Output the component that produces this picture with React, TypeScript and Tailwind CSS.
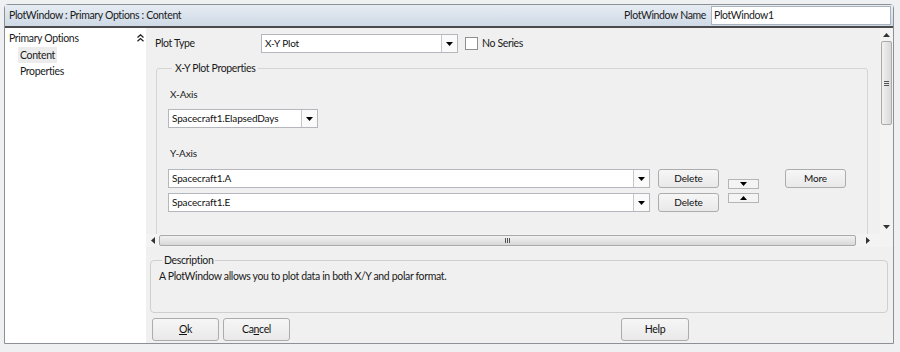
import React from 'react';

const font = "font-['Segoe_UI','Lato',sans-serif]";

const DownTri = ({ color = '#000' }: { color?: string }) => (
  <svg width="7" height="4" viewBox="0 0 7 4">
    <path d="M0 0h7L3.5 4z" fill={color} />
  </svg>
);

const UpTri = ({ color = '#000' }: { color?: string }) => (
  <svg width="7" height="4" viewBox="0 0 7 4">
    <path d="M0 4h7L3.5 0z" fill={color} />
  </svg>
);

const Combo = ({ value, className }: { value: string; className: string }) => (
  <div className={`flex h-[19px] border border-[#b5b7bc] bg-white ${className}`}>
    <div className="flex-1 truncate pl-[3px] text-[10px] leading-[17px] tracking-[-0.15px] text-[#111]">{value}</div>
    <div className="flex w-[16px] items-center justify-center border-l border-[#c5c7cc] bg-[#fafafa]">
      <DownTri />
    </div>
  </div>
);

const Button = ({ children, className }: { children: React.ReactNode; className: string }) => (
  <button className={`flex items-center justify-center rounded-[3px] border border-[#acacac] bg-gradient-to-b from-[#f6f6f6] to-[#e9e9e9] text-[#111] ${className}`}>
    {children}
  </button>
);

export default function App() {
  return (
    <div className={`${font} h-[352px] w-[900px] overflow-hidden bg-[#eef0f2] p-[4px] pb-[6px] pr-[6px] text-[10.5px] tracking-[-0.35px] text-[#1a1a1a]`}>
      <div className="flex h-[340px] flex-col rounded-t-[4px] border border-[#8d9196] bg-[#f0f0f0]">
        {/* header */}
        <div className="flex h-[23px] items-center border-b-2 border-[#4a4a4a] bg-gradient-to-b from-[#e6ecf3] to-[#cfdae6] pl-[4px] pr-[2px]">
          <div className="flex-1">PlotWindow : Primary Options : Content</div>
          <div className="mr-[5px]">PlotWindow Name</div>
          <div className="h-[19px] w-[180px] border border-[#a9b3bd] bg-white pl-[2px] leading-[17px]">PlotWindow1</div>
        </div>

        <div className="flex flex-1">
          {/* left tree */}
          <div className="w-[141px] bg-white pt-[2px]">
            <div className="flex items-center justify-between pl-[4px] pr-[2px] leading-[16px]">
              <span>Primary Options</span>
              <svg width="7" height="8" viewBox="0 0 7 8">
                <path d="M0.5 3.5L3.5 0.8 6.5 3.5M0.5 7.2L3.5 4.5 6.5 7.2" stroke="#222" strokeWidth="1.3" fill="none" />
              </svg>
            </div>
            <div className="ml-[13px] mt-[1px] w-fit bg-[#ececec] px-[2px] leading-[16px]">Content</div>
            <div className="ml-[15px] leading-[16px]">Properties</div>
          </div>

          {/* main */}
          <div className="flex flex-1 flex-col bg-[#f0f0f0]">
            <div className="flex h-[219px] flex-col">
              <div className="flex flex-1 overflow-hidden">
                <div className="flex-1 overflow-hidden pl-[9px] pt-[6px]">
                  <div className="flex h-[19px] items-center">
                    <span className="w-[106px]">Plot Type</span>
                    <Combo value="X-Y Plot" className="w-[197px]" />
                    <div className="ml-[7px] h-[13px] w-[13px] border border-[#8e8f8f] bg-white" />
                    <span className="ml-[4px]">No Series</span>
                  </div>
                  <fieldset className="ml-[1px] mr-[12px] mt-[9px] h-[200px] rounded-[3px] border border-[#d5d5d5] pl-[11px]">
                    <legend className="ml-[4px] px-[3px] leading-[13px]">X-Y Plot Properties</legend>
                    <div className="pl-[2px] pt-[13px] text-[10px] leading-[13px] tracking-[-0.15px]">X-Axis</div>
                    <Combo value="Spacecraft1.ElapsedDays" className="mt-[8px] w-[150px]" />
                    <div className="mt-[19px] pl-[2px] text-[10px] leading-[13px] tracking-[-0.15px]">Y-Axis</div>
                    <div className="mt-[9px] flex">
                      <div className="flex flex-col gap-[5px]">
                        <Combo value="Spacecraft1.A" className="w-[482px]" />
                        <Combo value="Spacecraft1.E" className="w-[482px]" />
                      </div>
                      <div className="ml-[8px] flex flex-col gap-[5px] text-[10px] tracking-[-0.15px]">
                        <Button className="h-[19px] w-[61px]">Delete</Button>
                        <Button className="h-[19px] w-[61px]">Delete</Button>
                      </div>
                      <div className="ml-[9px] mt-[10px] flex flex-col gap-[4px]">
                        <div className="flex h-[10px] w-[31px] items-center justify-center border border-[#b5b5b5] bg-[#f4f4f4]"><DownTri /></div>
                        <div className="flex h-[10px] w-[31px] items-center justify-center border border-[#b5b5b5] bg-[#f4f4f4]"><UpTri /></div>
                      </div>
                      <Button className="ml-[26px] h-[19px] w-[61px] text-[10px] tracking-[-0.15px]">More</Button>
                    </div>
                  </fieldset>
                </div>
                {/* vertical scrollbar */}
                <div className="flex w-[13px] flex-col items-center bg-[#f3f3f3] pt-[5px]">
                  <UpTri color="#333" />
                  <div className="mt-[4px] flex h-[84px] w-[11px] items-center justify-center rounded-[2px] border border-[#a9a9a9] bg-gradient-to-r from-[#f2f2f2] to-[#d8d8d8]">
                    <div className="flex flex-col gap-[1px]">
                      <div className="h-px w-[5px] bg-[#555]" />
                      <div className="h-px w-[5px] bg-[#555]" />
                      <div className="h-px w-[5px] bg-[#555]" />
                    </div>
                  </div>
                  <div className="flex-1" />
                  <div className="mb-[5px]"><DownTri color="#333" /></div>
                </div>
              </div>
              {/* horizontal scrollbar */}
              <div className="flex h-[13px] items-center bg-[#f3f3f3]">
                <div className="flex w-[13px] items-center justify-center">
                  <svg width="4" height="7" viewBox="0 0 4 7"><path d="M4 0v7L0 3.5z" fill="#333" /></svg>
                </div>
                <div className="flex h-[11px] w-[697px] items-center justify-center rounded-[2px] border border-[#a9a9a9] bg-gradient-to-b from-[#f2f2f2] to-[#d8d8d8]">
                  <div className="flex gap-[1px]">
                    <div className="h-[5px] w-px bg-[#555]" />
                    <div className="h-[5px] w-px bg-[#555]" />
                    <div className="h-[5px] w-px bg-[#555]" />
                  </div>
                </div>
                <div className="flex flex-1 items-center justify-center">
                  <svg width="4" height="7" viewBox="0 0 4 7"><path d="M0 0v7L4 3.5z" fill="#333" /></svg>
                </div>
                <div className="w-[13px]" />
              </div>
            </div>

            {/* description */}
            <fieldset className="ml-[4px] mr-[5px] mt-[7px] h-[59px] rounded-[4px] border border-[#cfcfcf] pl-[8px]">
              <legend className="ml-[3px] px-[2px] leading-[12px]">Description</legend>
              <div className="pt-[4px] leading-[13px]">A PlotWindow allows you to plot data in both X/Y and polar format.</div>
            </fieldset>

            {/* buttons */}
            <div className="mt-[5px] flex pl-[6px]">
              <Button className="h-[23px] w-[67px]"><span><u>O</u>k</span></Button>
              <Button className="ml-[4px] h-[23px] w-[67px]"><span>Ca<u>n</u>cel</span></Button>
              <Button className="ml-[331px] h-[23px] w-[68px]">Help</Button>
            </div>
          </div>
        </div>
      </div>
    </div>
  );
}
